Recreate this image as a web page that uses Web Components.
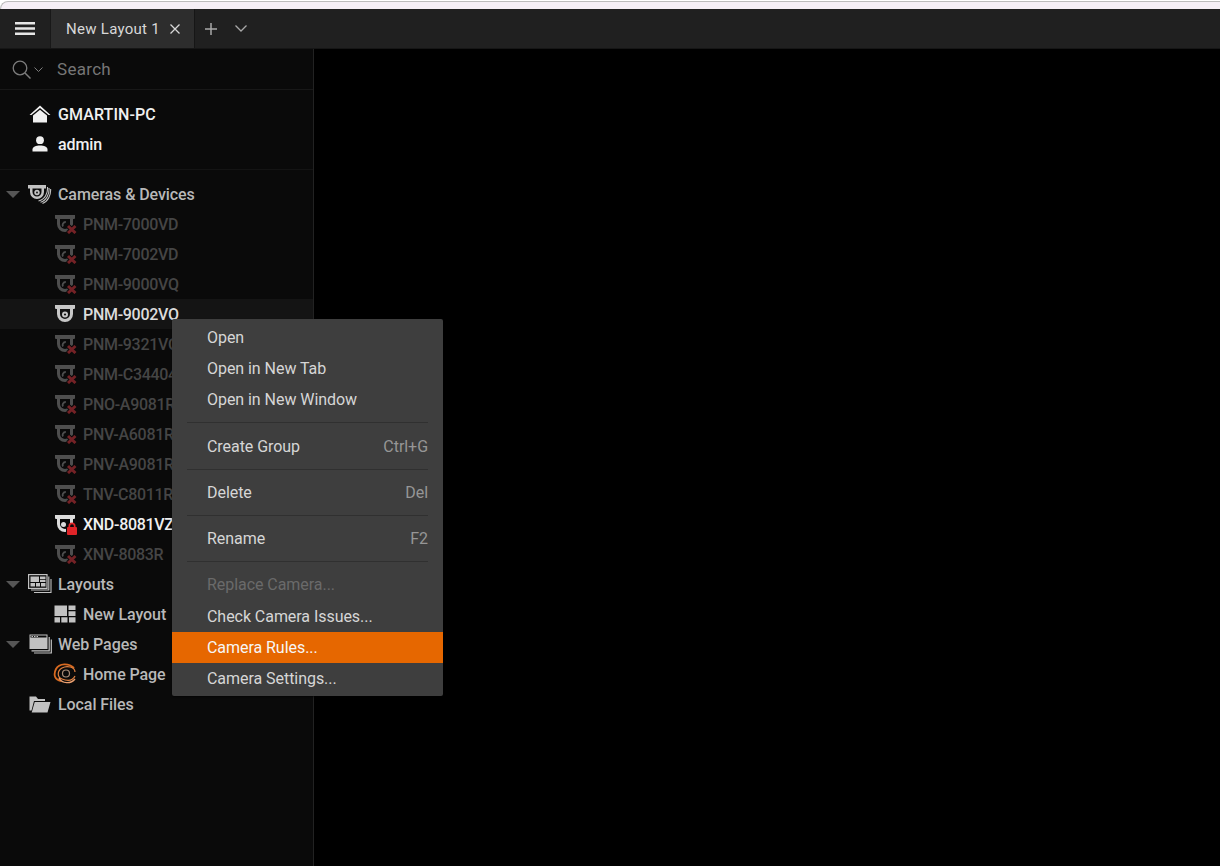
<!DOCTYPE html>
<html>
<head>
<meta charset="utf-8">
<title>New Layout 1</title>
<style>
  html, body { margin: 0; height: 100%; background: #000; overflow: hidden; }
  body { font-family: Roboto, "Liberation Sans", sans-serif; }
</style>
</head>
<body>
<app-shell></app-shell>

<script>
const dome = 'M2 1H22V4Q22 5 21 5H20V10A8 8 0 0 1 4 10V5H3Q2 5 2 4ZM7 5V10A5 5 0 0 0 17 10V5Z';

const icons = {
  home: `<svg width="22" height="18" viewBox="0 0 22 18"><path d="M11 0.5 21.500 10 19.500 10 11 3 2.500 10 0.500 10Z" fill="#f0f0f0"/><path d="M4 10.600 11 4.800 18 10.600V17.500H4Z" fill="#f0f0f0"/></svg>`,
  user: `<svg width="16" height="16" viewBox="0 0 16 16"><circle cx="8" cy="4.200" r="3.900" fill="#f0f0f0"/><path d="M0.500 15.500V13.500C0.500 11 4 9.600 8 9.600S15.500 11 15.500 13.500V15.500Z" fill="#f0f0f0"/></svg>`,
  cameras: `<svg width="24" height="20" viewBox="0 0 24 20" fill="none"><path fill-rule="evenodd" d="M0 1H18V4.500H16V8A7 7 0 0 1 2 8V4.500H0ZM4.500 4.500V8A4.500 4.500 0 0 0 13.500 8V4.500Z" fill="#c2c2c2"/><circle cx="9" cy="8.500" r="2.700" fill="#c2c2c2"/><circle cx="9" cy="8.500" r="0.900" fill="#0a0a0a"/><path d="M19.500 3C20 9 17 15.500 10.500 17M21 4C21.500 10 18.500 16.500 12.500 18.300M22.600 5C23 11 20 17.500 14.500 19.500" stroke="#c2c2c2" stroke-width="1.100"/></svg>`,
  camera: (c) => `<svg width="24" height="20" viewBox="0 0 24 20"><path fill-rule="evenodd" d="${dome}" fill="${c}"/><circle cx="12" cy="10.500" r="3" fill="${c}"/><circle cx="12" cy="10.500" r="1.100" fill="#141414"/></svg>`,
  offline: `<svg width="24" height="20" viewBox="0 0 24 20"><path fill-rule="evenodd" d="${dome}" fill="#4e4e4e"/><path d="M12.800 8A3 3 0 0 0 10 12.500" stroke="#4e4e4e" stroke-width="1.800" fill="none"/><path d="M15 12 22.500 19M22.500 12 15 19" stroke="#0a0a0a" stroke-width="5"/><path d="M15 12 22.500 19M22.500 12 15 19" stroke="#742226" stroke-width="3"/></svg>`,
  locked: `<svg width="24" height="20" viewBox="0 0 24 20" style="overflow:visible"><path fill-rule="evenodd" d="${dome}" fill="#dcdcdc"/><circle cx="10.500" cy="10.500" r="2.500" fill="#dcdcdc"/><rect x="13" y="9" width="12" height="13" fill="#0a0a0a"/><rect x="14" y="13" width="10" height="8" rx="1" fill="#e02428"/><path d="M16.300 13V12A2.700 2.700 0 0 1 21.700 12V13" stroke="#e02428" stroke-width="1.700" fill="none"/></svg>`,
  layouts: `<svg width="24" height="20" viewBox="0 0 24 20" fill="none"><rect x="0.600" y="0.600" width="18.400" height="13.800" stroke="#c2c2c2" stroke-width="1.200"/><path d="M2.500 2.500H11V8H2.500ZM12 2.500H17.500V5H12ZM12 5.800H17.500V8H12ZM2.500 9H7V12.500H2.500ZM8 9H12V12.500H8ZM13 9H17.500V12.500H13Z" fill="#c2c2c2"/><path d="M20.800 2.500V16H3M23 5V18.500H6" stroke="#c2c2c2" stroke-width="1.100"/></svg>`,
  layout: `<svg width="22" height="18" viewBox="0 0 22 18"><path d="M0.500 0.500H13V11H0.500ZM14.500 0.500H21.500V5H14.500ZM14.500 6.300H21.500V11H14.500ZM0.500 12.300H6V17.500H0.500ZM7.300 12.300H13.500V17.500H7.300ZM15 12.300H21.500V17.500H15Z" fill="#c2c2c2"/></svg>`,
  web: `<svg width="23" height="20" viewBox="0 0 23 20" fill="none"><path d="M0.500 0.500H18.500V15H0.500Z" fill="#c2c2c2"/><path d="M1.500 1.500H17.500V3.500H1.500Z" fill="#0a0a0a"/><path d="M2.500 2.500H4M5 2.500H6.500M7.500 2.500H9" stroke="#c2c2c2"/><path d="M20.200 3V16.800H2.500M22.300 5.500V19H5" stroke="#c2c2c2" stroke-width="1.200"/></svg>`,
  swirl: `<svg width="24" height="22" viewBox="0 0 24 22" fill="none"><path d="M21 5C16 0 6 0 3 6S2 17 8 18" stroke="#d86a20" stroke-width="1.800"/><path d="M22 9C22 4 14 2 9 5S4 14 9 16 19 19 22 13" stroke="#e08040" stroke-width="1.200"/><circle cx="13" cy="10.500" r="3.500" stroke="#a88c78" stroke-width="1.200"/><path d="M6 15C9 21 18 21 22 16" stroke="#eba070" stroke-width="1.400"/></svg>`,
  folder: `<svg width="22" height="17" viewBox="0 0 22 17"><path d="M0.500 0.500H7L9 3H16V5H5L2.500 14.500H0.500Z" fill="#c2c2c2"/><path d="M5.700 6H21.500L18.500 16.500H2.700Z" fill="#c2c2c2"/></svg>`
};

class TitleBar extends HTMLElement {
  constructor() {
    super();
    this.attachShadow({ mode: 'open' }).innerHTML = `
      <style>
        :host { display: flex; height: 40px; background: #202020; color: #d8d8d8; font-size: 15px; border-bottom: 1px solid #161616; box-sizing: border-box; }
        .menu { width: 50px; display: flex; align-items: center; justify-content: center; }
        .tab { width: 145px; background: #2d2d2d; display: flex; align-items: center; padding-left: 15px; box-sizing: border-box; gap: 10px; border-left: 1px solid #181818; border-right: 1px solid #161616; letter-spacing: .28px; }
        .tools { display: flex; align-items: center; }
        svg { display: block; }
      </style>
      <div class="menu">
        <svg width="20" height="13" viewBox="0 0 20 13"><path d="M0 0H20V2.400H0ZM0 5.300H20V7.700H0ZM0 10.600H20V13H0Z" fill="#e6e6e6"/></svg>
      </div>
      <div class="tab">New Layout 1
        <svg width="10" height="10" viewBox="0 0 10 10"><path d="M0.500 0.500 9.500 9.500M9.500 0.500 0.500 9.500" stroke="#d8d8d8" stroke-width="1.300"/></svg>
      </div>
      <div class="tools">
        <svg style="margin-left:10px" width="12" height="12" viewBox="0 0 12 12"><path d="M6 0V12M0 6H12" stroke="#a8a8a8" stroke-width="1.500"/></svg>
        <svg style="margin-left:18px" width="12" height="7" viewBox="0 0 12 7"><path d="M0.500 0.500 6 6 11.500 0.500" stroke="#a8a8a8" stroke-width="1.300" fill="none"/></svg>
      </div>`;
  }
}

class SearchBox extends HTMLElement {
  constructor() {
    super();
    this.attachShadow({ mode: 'open' }).innerHTML = `
      <style>
        :host { display: flex; align-items: center; height: 41px; border-bottom: 1px solid #181818; box-sizing: border-box; color: #767676; font-size: 17px; }
        svg { display: block; }
        span { margin-left: 14px; letter-spacing: .3px; }
      </style>
      <svg style="margin-left:12px" width="19" height="19" viewBox="0 0 19 19" fill="none"><circle cx="8" cy="8" r="6.800" stroke="#7c7c7c" stroke-width="1.300"/><path d="M13 13 18.500 18.500" stroke="#7c7c7c" stroke-width="1.500"/></svg>
      <svg style="margin-left:3px" width="9" height="5" viewBox="0 0 9 5"><path d="M0.500 0.500 4.500 4.500 8.500 0.500" stroke="#7c7c7c" fill="none"/></svg>
      <span>Search</span>`;
  }
}

// indent: child row, open: draws the tree arrow, model: a camera name
class TreeRow extends HTMLElement {
  constructor() {
    super();
    this.attachShadow({ mode: 'open' }).innerHTML = `
      <style>
        :host { display: flex; align-items: center; height: 30px; font-size: 16px; font-weight: 500; color: #b8b8b8; position: relative; letter-spacing: -.08px; }
        :host([tone="white"]) { color: #f0f0f0; }
        :host([tone="dim"]) { color: #454545; }
        :host([hl]) { background: #141414; color: #dcdcdc; }
        :host([model]) { letter-spacing: -.3px; }
        .arrow { position: absolute; left: 6px; top: 12px; width: 0; height: 0; border: 7px solid transparent; border-top: 7px solid #565656; border-bottom: 0; display: none; }
        :host([open]) .arrow { display: block; }
        .icon { width: 24px; display: flex; justify-content: center; margin-left: 28px; margin-right: 6px; flex: none; }
        :host([indent]) .icon { margin-left: 53px; margin-right: 6px; }
        ::slotted(span) { display: flex; }
        .label { white-space: nowrap; }
      </style>
      <span class="arrow"></span>
      <span class="icon"><slot name="icon"></slot></span>
      <span class="label"><slot></slot></span>`;
  }
}

class ContextMenu extends HTMLElement {
  constructor() {
    super();
    this.attachShadow({ mode: 'open' }).innerHTML = `
      <style>
        :host { display: block; position: absolute; left: 172px; top: 319px; width: 271px; box-sizing: border-box; padding: 3px 0 2px; background: #3e3e3e; border-radius: 2px; box-shadow: 0 1px 2px rgba(0,0,0,.6); }
      </style>
      <slot></slot>`;
  }
}

class MenuItem extends HTMLElement {
  constructor() {
    super();
    this.attachShadow({ mode: 'open' }).innerHTML = `
      <style>
        :host { display: flex; justify-content: space-between; align-items: center; height: 31px; padding: 0 15px 0 35px; font-size: 16px; color: #d6d6d6; letter-spacing: -.05px; }
        :host([disabled]) { color: #6a6a6a; margin-bottom: 1px; }
        :host([active]) { background: #e66700; color: #f6f6f6; }
        .key { color: #969696; }
      </style>
      <span><slot></slot></span>
      <span class="key"><slot name="key"></slot></span>`;
  }
}

class MenuSep extends HTMLElement {
  constructor() {
    super();
    this.attachShadow({ mode: 'open' }).innerHTML = `
      <style>
        :host { display: block; height: 1px; margin: 7px 15px; background: #303030; }
      </style>`;
  }
}

class AppShell extends HTMLElement {
  constructor() {
    super();
    const rows = [
      ['PNM-7000VD', 'dim'], ['PNM-7002VD', 'dim'], ['PNM-9000VQ', 'dim'],
      ['PNM-9002VO', 'hl'],
      ['PNM-9321VQ', 'dim'], ['PNM-C34404', 'dim'], ['PNO-A9081R', 'dim'], ['PNV-A6081R', 'dim'],
      ['PNV-A9081R', 'dim'], ['TNV-C8011R', 'dim'],
      ['XND-8081VZ', 'lock'], ['XNV-8083R', 'dim']
    ].map(([name, kind]) => {
      if (kind === 'hl') return `<tree-row indent model hl><span slot="icon">${icons.camera('#c8c8c8')}</span>${name}</tree-row>`;
      if (kind === 'lock') return `<tree-row indent model tone="white"><span slot="icon">${icons.locked}</span>${name}</tree-row>`;
      return `<tree-row indent model tone="dim"><span slot="icon">${icons.offline}</span>${name}</tree-row>`;
    }).join('');

    this.attachShadow({ mode: 'open' }).innerHTML = `
      <style>
        :host { display: block; position: relative; height: 866px; background: #000; overflow: hidden; }
        .chrome { height: 9px; box-sizing: border-box; background: #fff; padding-top: 1px; }
        .chrome div { height: 8px; box-sizing: border-box; background: #f5eff6; border-top: 1px solid #bcbcbc; border-left: 1px solid #bcbcbc; border-radius: 8px 0 0 0; }
        .body { display: flex; height: 817px; }
        .side { width: 314px; box-sizing: border-box; background: #0a0a0a; border-right: 1px solid #222; flex: none; }
        .tree-top { padding: 9px 0 10px; border-bottom: 1px solid #141414; margin-bottom: 9px; }
        .main { flex: 1; background: #000; }
      </style>
      <div class="chrome"><div></div></div>
      <title-bar></title-bar>
      <div class="body">
        <div class="side">
          <search-box></search-box>
          <div class="tree-top">
            <tree-row tone="white" style="letter-spacing:.1px"><span slot="icon">${icons.home}</span>GMARTIN-PC</tree-row>
            <tree-row tone="white"><span slot="icon">${icons.user}</span>admin</tree-row>
          </div>
          <tree-row open><span slot="icon">${icons.cameras}</span>Cameras &amp; Devices</tree-row>
          ${rows}
          <tree-row open><span slot="icon">${icons.layouts}</span>Layouts</tree-row>
          <tree-row indent><span slot="icon">${icons.layout}</span>New Layout</tree-row>
          <tree-row open><span slot="icon">${icons.web}</span>Web Pages</tree-row>
          <tree-row indent><span slot="icon">${icons.swirl}</span>Home Page</tree-row>
          <tree-row><span slot="icon">${icons.folder}</span>Local Files</tree-row>
        </div>
        <div class="main"></div>
      </div>
      <context-menu>
        <menu-item>Open</menu-item>
        <menu-item>Open in New Tab</menu-item>
        <menu-item>Open in New Window</menu-item>
        <menu-sep style="margin-bottom:8px"></menu-sep>
        <menu-item>Create Group<span slot="key">Ctrl+G</span></menu-item>
        <menu-sep></menu-sep>
        <menu-item>Delete<span slot="key">Del</span></menu-item>
        <menu-sep></menu-sep>
        <menu-item>Rename<span slot="key">F2</span></menu-item>
        <menu-sep></menu-sep>
        <menu-item disabled>Replace Camera...</menu-item>
        <menu-item>Check Camera Issues...</menu-item>
        <menu-item active>Camera Rules...</menu-item>
        <menu-item>Camera Settings...</menu-item>
      </context-menu>`;
  }
}

customElements.define('title-bar', TitleBar);
customElements.define('search-box', SearchBox);
customElements.define('tree-row', TreeRow);
customElements.define('menu-item', MenuItem);
customElements.define('menu-sep', MenuSep);
customElements.define('context-menu', ContextMenu);
customElements.define('app-shell', AppShell);
</script>
</body>
</html>
